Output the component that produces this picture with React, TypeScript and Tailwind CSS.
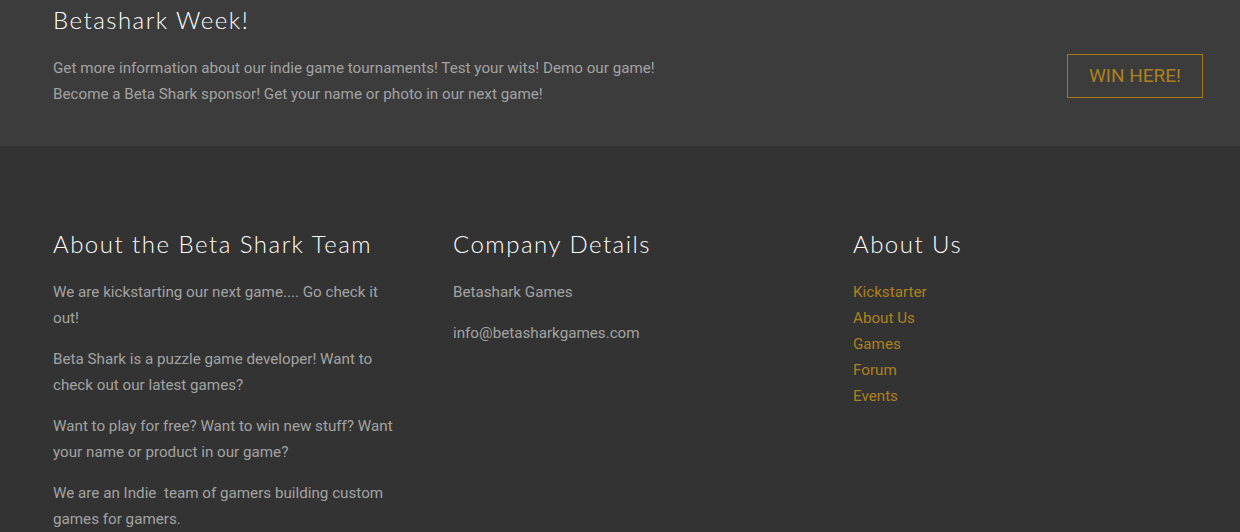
const aboutParagraphs = [
  'We are kickstarting our next game.... Go check it out!',
  'Beta Shark is a puzzle game developer! Want to check out our latest games?',
  'Want to play for free? Want to win new stuff? Want your name or product in our game?',
  'We are an Indie\u00a0 team of gamers building custom games for gamers.',
]

const links = ['Kickstarter', 'About Us', 'Games', 'Forum', 'Events']

const headingFont = "font-['Lato',sans-serif] font-light tracking-[0.062em] text-white text-[24px]"
const bodyFont = "font-['Roboto',sans-serif] text-[15.2px] leading-[26px] text-[#a3a3a3]"

export default function App() {
  return (
    <div className="w-[1240px] h-[532px] overflow-hidden bg-[#333333]">
      <section className="h-[146px] bg-[#3c3c3c] px-[53px] pt-[6px] flex justify-between">
        <div>
          <h2 className={`${headingFont} leading-[28px]`}>Betashark Week!</h2>
          <p className={`${bodyFont} mt-[21px]`}>
            Get more information about our indie game tournaments! Test your wits! Demo our game!
            <br />
            Become a Beta Shark sponsor! Get your name or photo in our next game!
          </p>
        </div>
        <div className="pt-[48px] mr-[-16px]">
          <a
            href="#"
            className="flex items-center justify-center w-[136px] h-[44px] border border-[#a57a1a] text-[#ad811e] font-['Roboto',sans-serif] text-[19px]"
          >
            WIN HERE!
          </a>
        </div>
      </section>

      <footer className="px-[53px] pt-[85px] grid grid-cols-[400px_400px_1fr]">
        <div className="pr-[48px]">
          <h3 className={`${headingFont} leading-[26px]`}>About the Beta Shark Team</h3>
          <div className="mt-[22px] flex flex-col gap-[15px]">
            {aboutParagraphs.map((p) => (
              <p key={p} className={bodyFont}>
                {p}
              </p>
            ))}
          </div>
        </div>

        <div>
          <h3 className={`${headingFont} leading-[26px]`}>Company Details</h3>
          <div className="mt-[22px] flex flex-col gap-[15px]">
            <p className={bodyFont}>Betashark Games</p>
            <p className={bodyFont}>info@betasharkgames.com</p>
          </div>
        </div>

        <div>
          <h3 className={`${headingFont} leading-[26px]`}>About Us</h3>
          <ul className="mt-[22px]">
            {links.map((l) => (
              <li key={l}>
                <a href="#" className="font-['Roboto',sans-serif] text-[15.2px] leading-[26px] text-[#ad811e]">
                  {l}
                </a>
              </li>
            ))}
          </ul>
        </div>
      </footer>
    </div>
  )
}
